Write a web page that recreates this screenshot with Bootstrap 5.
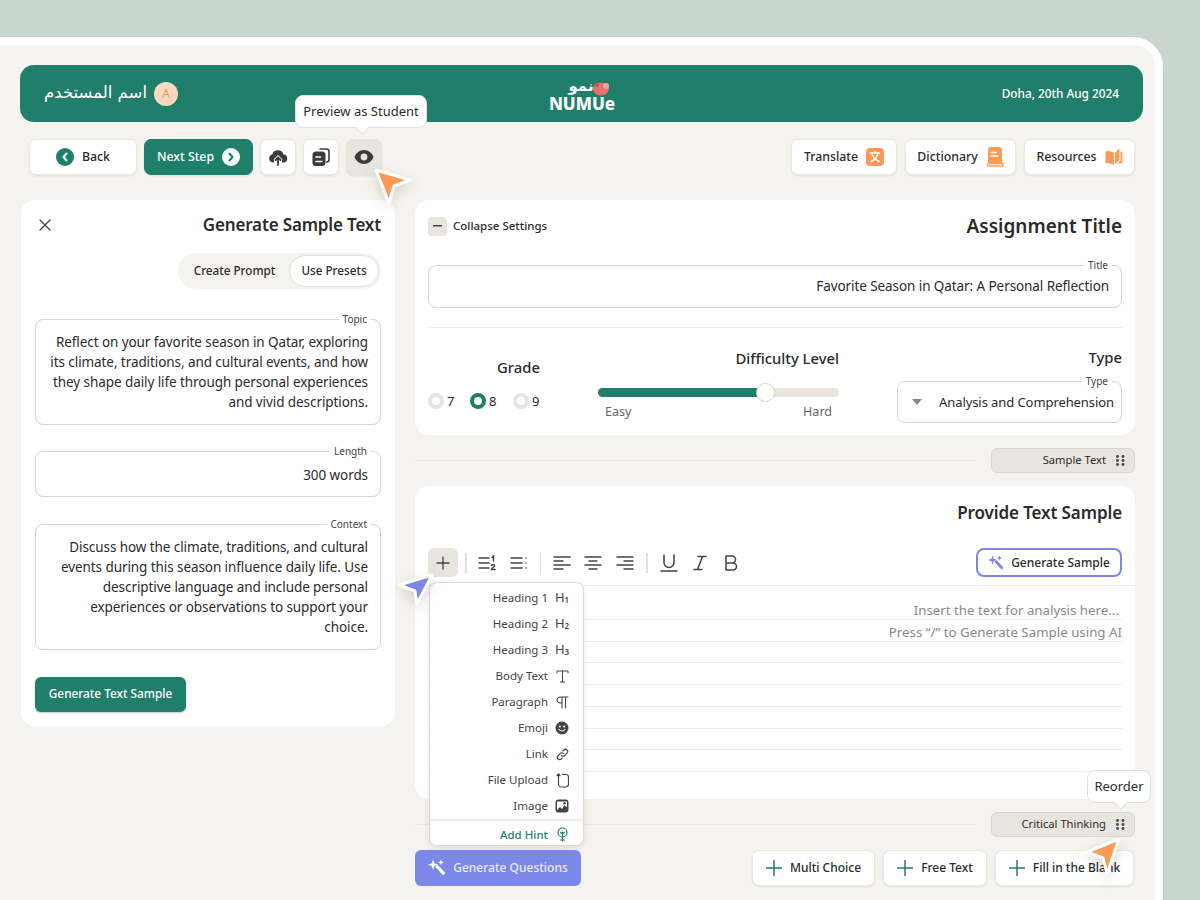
<!DOCTYPE html>
<html lang="en">
<head>
  <meta charset="UTF-8">
  <title>Numue - Assignment</title>
  <link href="https://cdn.jsdelivr.net/npm/bootstrap@5.3.2/dist/css/bootstrap.min.css" rel="stylesheet">
  <style>
    html, body { height: 100%; overflow: hidden; }
    body {
      font-family: "Noto Sans", "DejaVu Sans", sans-serif;
      background-color: #c9d6cf;
      color: #2b2b2b;
      position: relative;
    }
    .frame {
      width: 1203px;
      height: 900px;
      margin: 37px 0 0 -40px;
      padding: 20px 12px 0 52px;
      background: #f5f3ef;
      border: 8px solid #fff;
      border-radius: 30px;
    }
    .top-band {
      height: 57px;
      background: #1f7f6a;
      border-radius: 14px;
      padding: 0 24px;
      color: #fff;
      position: relative;
    }
    .user-name { font-family: "DejaVu Sans", sans-serif; font-size: 16.5px; }
    .avatar {
      width: 24px; height: 24px; border-radius: 50%;
      background: #fbd9c0; color: #f0955a; font-size: 12px; line-height: 24px; text-align: center;
      margin-left: 7px;
    }
    .date-text { font-size: 11.8px; font-weight: 500; }
    .logo-box {
      position: absolute; left: 527px; top: 13px; width: 70px; height: 34px;
      text-align: center; line-height: 1;
    }
    .logo-ar { font-family: "DejaVu Sans", sans-serif; font-size: 15px; font-weight: 700; display: block; height: 17px; line-height: 17px; padding-right: 2px; }
    .logo-en { font-size: 17px; font-weight: 800; display: block; line-height: 17px; }
    .logo-pig { position: absolute; left: 44px; top: 2px; }

    .tool-row { margin-top: 17px; padding: 0 8px 0 9px; height: 36px; }
    .tool-btn {
      height: 36px; padding: 0; background: #fff; color: #2b2b2b; font-size: 12.3px; font-weight: 500;
      border: 1px solid #ebe8e2; border-radius: 7px; box-shadow: 0 1px 2px rgba(90, 80, 60, .12);
      display: inline-flex; align-items: center; justify-content: center; gap: 8px;
    }
    .tool-btn:hover { background: #fff; }
    .left-tools { gap: 7px; }
    .w-back { width: 108px; }
    .w-next { width: 109px; background: #1f7f6a; border-color: #1f7f6a; color: #fff; }
    .w-next:hover { background: #1f7f6a; color: #fff; }
    .w-icon { width: 36px; }
    .w-eye { background: #e8e4de; border-color: #e8e4de; }
    .w-eye:hover { background: #e8e4de; }
    .w-tr { width: 106px; }
    .w-dict { width: 111px; }
    .w-res { width: 111px; }

    .hint-bubble {
      position: absolute; background: #fff; color: #2b2b2b; font-size: 13px; line-height: 1;
      border: 1.5px solid #e5e1da; border-radius: 8px; white-space: nowrap;
      display: flex; align-items: center; justify-content: center;
    }
    .hint-bubble::after {
      content: ""; position: absolute; bottom: -6px; width: 9px; height: 9px; background: #fff;
      border-right: 1.5px solid #e5e1da; border-bottom: 1.5px solid #e5e1da; transform: rotate(45deg);
    }
    .tip-preview { left: -51px; top: -44px; width: 132px; height: 33px; }
    .tip-preview::after { left: 62px; }
    .tip-reorder { right: -17px; top: -43px; width: 64px; height: 33px; }
    .tip-reorder::after { left: 28px; }

    .work-area { margin-top: 25px; padding-left: 1px; gap: 20px; }
    .side-col { width: 374px; flex: none; }
    .main-col { width: 720px; flex: none; }
    .panel { border: 0; border-radius: 14px; background: #fff; }
    .side-panel { height: 526px; padding: 14px; }
    .side-title { font-size: 17px; font-weight: 600; letter-spacing: -.15px; margin: 0; }
    .side-head { padding: 0 0 0 3px; height: 21px; margin-top: 1px; }
    .seg-wrap {
      width: 203px; height: 36px; background: #f5f3ef; border-radius: 18px; padding: 2px;
      margin: 17px 0 0 143px; font-size: 11.7px; font-weight: 500;
    }
    .seg-off { width: 109px; text-align: center; }
    .seg-on { width: 90px; height: 32px; background: #fff; border: 1px solid #e5e1da; border-radius: 16px; }
    .notch-field {
      position: relative; border: 1.5px solid #d9d5ce; border-radius: 8px; background: #fff;
      font-size: 13.5px; letter-spacing: -.08px; line-height: 20px; text-align: right; padding: 12px;
    }
    .notch-label {
      position: absolute; top: -7px; right: 9px; background: #fff; padding: 0 4px;
      font-size: 10px; letter-spacing: 0; line-height: 12px; color: #444;
    }
    .f-topic { height: 106px; margin-top: 30px; }
    .f-length { height: 46px; margin-top: 26px; padding-top: 13px; }
    .f-context { height: 126px; margin-top: 27px; }
    .green-btn {
      width: 151px; height: 36px; background: #1f7f6a; color: #fff; font-size: 11.8px; font-weight: 500;
      border: 0; border-radius: 6px; padding: 0; margin-top: 27px; box-shadow: 0 1px 2px rgba(30, 90, 75, .3);
    }
    .green-btn:hover { background: #1f7f6a; color: #fff; }

    .set-panel { height: 235px; padding: 0 13px; }
    .set-head { height: 52px; }
    .minus-box {
      width: 19px; height: 19px; background: #e8e4de; border-radius: 4px; margin-right: 6px;
      display: inline-flex; align-items: center; justify-content: center;
    }
    .collapse-txt { font-size: 11.5px; font-weight: 500; }
    .big-title { font-size: 19px; font-weight: 600; margin: 0; }
    .f-title { height: 43px; margin-top: 13px; padding: 10px 12px; }
    .soft-rule { border-top: 1.5px solid #efedea; margin: 19px 0 0; opacity: 1; }
    .set-cols { margin-top: 20px; }
    .grade-col { width: 170px; flex: none; }
    .grade-label { font-size: 14.8px; font-weight: 500; text-align: center; padding: 9px 0 0 11px; line-height: 20px; }
    .grade-row { margin-top: 16px; font-size: 13px; padding-left: 0; line-height: 16px; }
    .radio-dot { width: 16px; height: 16px; border-radius: 50%; border: 4px solid #e8e4de; background: #fff; display: inline-block; margin-right: 3px; }
    .radio-dot.picked { border-color: #1f7f6a; }
    .slide-col { width: 241px; flex: none; margin-left: 0; }
    .level-label { font-size: 14.8px; font-weight: 500; text-align: right; line-height: 20px; }
    .slide-track { position: relative; margin-top: 20px; }
    .slide-track .progress { height: 9px; background: #e8e4de; border-radius: 5px; }
    .slide-track .progress-bar { background: #1f7f6a; }
    .slide-thumb {
      position: absolute; left: 158px; top: -5px; width: 19px; height: 19px; border-radius: 50%;
      background: #fff; border: 1.5px solid #d7d3cb;
    }
    .slide-ends { font-size: 12.5px; color: #666; padding: 5px 7px 0; line-height: 20px; }
    .type-col { margin-left: auto; width: 225px; flex: none; }
    .type-label { font-size: 14.8px; font-weight: 500; text-align: right; line-height: 20px; margin-top: -1px; }
    .f-type { height: 42px; margin-top: 14px; padding: 10px 8px 10px 14px; white-space: nowrap; font-size: 13px; letter-spacing: -.08px; }
    .caret-down { width: 0; height: 0; border-left: 5px solid transparent; border-right: 5px solid transparent; border-top: 6px solid #8c8880; margin-right: 17px; }

    .split-row { height: 25px; margin: 13px 0; }
    .split-line { flex: 1; border-top: 1.5px solid #ebe8e3; margin-right: 16px; }
    .tag-pill {
      width: 144px; height: 25px; background: #e8e4de; border: 1px solid #dcd8d1; border-radius: 6px;
      font-size: 11.2px; padding-right: 9px; gap: 10px; position: relative;
    }

    .text-panel { height: 313px; position: relative; overflow: visible; }
    .text-title { font-size: 17px; letter-spacing: -.1px; font-weight: 600; text-align: right; margin: 0; padding: 15px 13px 0 0; line-height: 24px; }
    .edit-bar { height: 29px; margin-top: 23px; padding: 0 13px; }
    .plus-box { width: 30px; height: 29px; background: #e8e4de; border-radius: 6px; display: flex; align-items: center; justify-content: center; }
    .bar-sep { width: 1.5px; height: 20px; background: #e5e1da; }
    .gen-btn {
      margin-left: auto; width: 146px; height: 29px; padding: 0; font-size: 12px; font-weight: 500; color: #2b2b2b;
      background: #fff; border: 2px solid #7b88e8; border-radius: 8px;
      display: inline-flex; align-items: center; justify-content: center; gap: 7px;
    }
    .gen-btn:hover { background: #fff; color: #2b2b2b; }
    .edit-rule { border-top: 1.5px solid #efedea; margin-top: 8px; }
    .rule-stack { padding: 12px 13px 0; }
    .rule-line { height: 21.75px; border-bottom: 1.5px solid #efedea; font-size: 13.3px; color: #8a8a8a; text-align: right; line-height: 24px; padding-right: 3px; }
    .rule-line:nth-child(2) { padding-right: 0; }

    .insert-menu {
      position: absolute; left: 14px; top: 96px; width: 155px; min-width: 0; height: 264px; padding: 2px 0 0; margin: 0;
      background: #fff; border: 1.5px solid #dfdbd4; border-radius: 8px; box-shadow: 0 2px 6px rgba(70, 60, 40, .12);
      font-size: 11.5px; z-index: 5;
    }
    .insert-menu .dropdown-item {
      height: 26px; padding: 0 13px 0 0; color: #444; display: flex; align-items: center; justify-content: flex-end; gap: 6px;
    }
    .insert-menu .dropdown-divider { margin: 0; border-top: 2px solid #efedea; }
    .insert-menu .dropdown-item.hint-item { color: #1f7f6a; font-weight: 500; height: 27px; }
    .m-ico { width: 16px; height: 16px; display: flex; align-items: center; justify-content: center; flex: none; font-size: 13px; color: #444; }
    sub.h-num { font-size: 8px; bottom: 0; top: 2px; font-weight: 600; }

    .add-row { height: 36px; margin-top: 2px; }
    .violet-btn {
      width: 166px; height: 36px; padding: 0; background: #7b88e8; color: #e9ebfb; font-size: 12px; font-weight: 500;
      border: 0; border-radius: 6px; display: inline-flex; align-items: center; justify-content: center; gap: 7px;
    }
    .violet-btn:hover { background: #7b88e8; color: #e9ebfb; }
    .add-group { margin-right: 1px; }
    .add-btn { gap: 8px; font-size: 12px; }
    .w-multi { width: 123px; }
    .w-free { width: 104px; }
    .w-blank { width: 139px; }

    .cursor-mark { position: absolute; z-index: 20; filter: drop-shadow(0 4px 6px rgba(60, 50, 30, .18)); }
    .cur-a { left: 370px; top: 164px; }
    .cur-b { left: 394px; top: 570px; }
    .cur-c { left: 1082px; top: 834px; }
  </style>
</head>

<body>
  <div class="frame">
    <!-- top band -->
    <div class="top-band d-flex align-items-center justify-content-between">
      <div class="d-flex align-items-center">
        <span class="user-name" dir="rtl">اسم المستخدم</span>
        <span class="avatar">A</span>
      </div>
      <div class="logo-box">
        <span class="logo-ar" dir="rtl">نمو</span>
        <span class="logo-en">NUMUe</span>
        <svg class="logo-pig" width="20" height="17" viewBox="0 0 20 17"><ellipse cx="10" cy="9" rx="8" ry="6.5" fill="#e8716d"/><circle cx="15" cy="6" r="3" fill="#f4a39c"/><circle cx="6" cy="5" r="2" fill="#c9524f"/></svg>
      </div>
      <span class="date-text">Doha, 20th Aug 2024</span>
    </div>

    <!-- toolbar -->
    <div class="tool-row d-flex">
      <div class="d-flex left-tools">
        <button class="btn tool-btn w-back">
          <svg width="18" height="18" viewBox="0 0 18 18"><circle cx="9" cy="9" r="9" fill="#1f7f6a"/><path d="M10.5 5.5 7.5 9l3 3.5" fill="none" stroke="#fff" stroke-width="2" stroke-linecap="round" stroke-linejoin="round"/></svg>
          Back
        </button>
        <button class="btn tool-btn w-next">
          Next Step
          <svg width="18" height="18" viewBox="0 0 18 18"><circle cx="9" cy="9" r="9" fill="#fff"/><path d="M7.5 5.5 10.5 9l-3 3.5" fill="none" stroke="#1f7f6a" stroke-width="2" stroke-linecap="round" stroke-linejoin="round"/></svg>
        </button>
        <button class="btn tool-btn w-icon">
          <svg width="20" height="20" viewBox="0 0 20 20"><path d="M6 15.5H5A4 4 0 0 1 4.3 7.6 5.8 5.8 0 0 1 15.5 7.5 4 4 0 0 1 15 15.5h-1V12.5l1 .6-5-5-5 5 1-.6z" fill="#3b3b3b"/><path d="M10 18V11M7.5 13 10 10.5 12.5 13" fill="none" stroke="#3b3b3b" stroke-width="1.8" stroke-linecap="round" stroke-linejoin="round"/></svg>
        </button>
        <button class="btn tool-btn w-icon">
          <svg width="20" height="20" viewBox="0 0 20 20"><path d="M9 2h6.500a2.500 2.500 0 0 1 2.500 2.500v8a2.500 2.500 0 0 1-2.500 2.500" fill="none" stroke="#3b3b3b" stroke-width="1.6" stroke-linecap="round"/><rect x="1.500" y="4.500" width="13" height="14.500" rx="3.500" fill="#3b3b3b"/><path d="M5 10h4.500M5 14.500h6" stroke="#fff" stroke-width="1.600" stroke-linecap="round"/></svg>
        </button>
        <div class="position-relative">
          <button class="btn tool-btn w-icon w-eye">
            <svg width="20" height="14" viewBox="0 0 20 14"><path d="M10 0C5.500 0 2 3 .5 7 2 11 5.500 14 10 14s8-3 9.500-7C18 3 14.500 0 10 0z" fill="#3b3b3b"/><circle cx="10" cy="7" r="3.400" fill="#e8e4de"/></svg>
          </button>
          <div class="hint-bubble tip-preview">Preview as Student</div>
        </div>
      </div>
      <div class="d-flex gap-2 ms-auto">
        <button class="btn tool-btn w-tr">
          Translate
          <svg width="18" height="18" viewBox="0 0 18 18"><rect width="18" height="18" rx="4" fill="#ff9a56"/><path d="M4.500 5h9M9 3.500V5M6 5.500c.8 3.500 3.500 6.500 7 8M12 5.500c-.8 3.500-3.500 6.500-7 8" fill="none" stroke="#fff" stroke-width="1.400" stroke-linecap="round"/></svg>
        </button>
        <button class="btn tool-btn w-dict">
          Dictionary
          <svg width="18" height="20" viewBox="0 0 18 20"><path d="M2 3a3 3 0 0 1 3-3h8a3 3 0 0 1 3 3v13H2z" fill="#ff9a56"/><path d="M5 5.500h5M5 9h7" stroke="#fff" stroke-width="1.500" stroke-linecap="round"/><path d="M1.500 17.500a1 1 0 0 1 1-1H17v2.500H2.500a1 1 0 0 1-1-1z" fill="none" stroke="#ff9a56" stroke-width="1.300"/></svg>
        </button>
        <button class="btn tool-btn w-res">
          Resources
          <svg width="18" height="18" viewBox="0 0 18 18" fill="#ff9a56"><path d="M.5 4.500A1.500 1.500 0 0 1 2 3c2.500 0 5 .6 7 2v12c-2-1.200-4.500-1.700-7-1.700a1.500 1.500 0 0 1-1.500-1.500z"/><path d="M10 5 13.500 1c.4-.4.9-.2.9.3V12L10 16z"/><path d="M15.500 3.500h.5A1.500 1.500 0 0 1 17.500 5v8.800a1.500 1.500 0 0 1-1.500 1.500c-1.800 0-3.300.4-4.800 1.200l4.300-3.800z"/></svg>
        </button>
      </div>
    </div>

    <div class="work-area d-flex align-items-start">
      <!-- left panel -->
      <div class="side-col">
        <div class="card panel side-panel">
          <div class="side-head d-flex align-items-center justify-content-between">
            <svg width="14" height="14" viewBox="0 0 14 14"><path d="M2 2l10 10M12 2 2 12" stroke="#444" stroke-width="1.300" stroke-linecap="round"/></svg>
            <h2 class="side-title">Generate Sample Text</h2>
          </div>
          <div class="seg-wrap d-flex align-items-center">
            <span class="seg-off">Create Prompt</span>
            <span class="seg-on d-flex align-items-center justify-content-center">Use Presets</span>
          </div>
          <div class="notch-field f-topic">
            <span class="notch-label">Topic</span>
            Reflect on your favorite season in Qatar, exploring<br>its climate, traditions, and cultural events, and how<br>they shape daily life through personal experiences<br>and vivid descriptions.
          </div>
          <div class="notch-field f-length">
            <span class="notch-label">Length</span>
            300 words
          </div>
          <div class="notch-field f-context">
            <span class="notch-label">Context</span>
            Discuss how the climate, traditions, and cultural<br>events during this season influence daily life. Use<br>descriptive language and include personal<br>experiences or observations to support your<br>choice.
          </div>
          <button class="btn green-btn">Generate Text Sample</button>
        </div>
      </div>

      <!-- right column -->
      <div class="main-col">
        <div class="card panel set-panel">
          <div class="set-head d-flex align-items-center justify-content-between">
            <div class="d-flex align-items-center">
              <span class="minus-box"><svg width="9" height="2" viewBox="0 0 9 2"><rect width="9" height="1.500" fill="#444"/></svg></span>
              <span class="collapse-txt">Collapse Settings</span>
            </div>
            <h2 class="big-title">Assignment Title</h2>
          </div>
          <div class="notch-field f-title">
            <span class="notch-label">Title</span>
            Favorite Season in Qatar: A Personal Reflection
          </div>
          <hr class="soft-rule">
          <div class="set-cols d-flex">
            <div class="grade-col">
              <div class="grade-label">Grade</div>
              <div class="grade-row d-flex">
                <span class="d-flex align-items-center" style="width:42px"><span class="radio-dot"></span>7</span>
                <span class="d-flex align-items-center" style="width:43px"><span class="radio-dot picked"></span>8</span>
                <span class="d-flex align-items-center"><span class="radio-dot"></span>9</span>
              </div>
            </div>
            <div class="slide-col">
              <div class="level-label">Difficulty Level</div>
              <div class="slide-track">
                <div class="progress"><div class="progress-bar" style="width: 69%"></div></div>
                <span class="slide-thumb"></span>
              </div>
              <div class="slide-ends d-flex justify-content-between"><span>Easy</span><span>Hard</span></div>
            </div>
            <div class="type-col">
              <div class="type-label">Type</div>
              <div class="notch-field f-type d-flex align-items-center">
                <span class="notch-label">Type</span>
                <span class="caret-down"></span>
                <span>Analysis and Comprehension</span>
              </div>
            </div>
          </div>
        </div>

        <div class="split-row d-flex align-items-center">
          <div class="split-line"></div>
          <div class="tag-pill d-flex align-items-center justify-content-end">
            Sample Text
            <svg width="9" height="11" viewBox="0 0 9 11" fill="#444"><circle cx="1.500" cy="1.500" r="1.400"/><circle cx="7" cy="1.500" r="1.400"/><circle cx="1.500" cy="5.500" r="1.400"/><circle cx="7" cy="5.500" r="1.400"/><circle cx="1.500" cy="9.500" r="1.400"/><circle cx="7" cy="9.500" r="1.400"/></svg>
          </div>
        </div>

        <div class="card panel text-panel">
          <h2 class="text-title">Provide Text Sample</h2>
          <div class="edit-bar d-flex align-items-center">
            <span class="plus-box"><svg width="14" height="14" viewBox="0 0 14 14"><path d="M7 1v12M1 7h12" stroke="#444" stroke-width="1.300" stroke-linecap="round"/></svg></span>
            <span class="bar-sep" style="margin:0 11px 0 7px"></span>
            <svg class="me-2" width="20" height="16" viewBox="0 0 20 16" fill="none" stroke="#444" stroke-width="1.500" stroke-linecap="round"><path d="M1 3h10M1 8h10M1 13h10M14 2.500 15.500 1v5M13.500 10.500c1-1.500 3.500-1 3 .5-.3 1-2.500 2-3 3.500h3.500"/></svg>
            <svg width="18" height="16" viewBox="0 0 18 16" class="ms-1" fill="none" stroke="#444" stroke-width="1.500" stroke-linecap="round"><path d="M1 3h11M1 8h11M1 13h11M16 3h.1M16 8h.1M16 13h.1"/></svg>
            <span class="bar-sep" style="margin:0 12px 0 12px"></span>
            <svg width="18" height="16" viewBox="0 0 18 16" fill="none" stroke="#444" stroke-width="1.500" stroke-linecap="round"><path d="M1 2h16M1 6h9M1 10h16M1 14h9"/></svg>
            <svg style="margin-left:13px" width="18" height="16" viewBox="0 0 18 16" fill="none" stroke="#444" stroke-width="1.500" stroke-linecap="round"><path d="M1 2h16M5 6h8M1 10h16M5 14h8"/></svg>
            <svg style="margin-left:14px" width="18" height="16" viewBox="0 0 18 16" fill="none" stroke="#444" stroke-width="1.500" stroke-linecap="round"><path d="M1 2h16M8 6h9M1 10h16M8 14h9"/></svg>
            <span class="bar-sep" style="margin:0 12px 0 12px"></span>
            <svg width="18" height="18" viewBox="0 0 18 18" fill="none" stroke="#444" stroke-width="1.500" stroke-linecap="round"><path d="M4 1v7.500a5 5 0 0 0 10 0V1M1 17h16"/></svg>
            <svg style="margin-left:15px" width="14" height="16" viewBox="0 0 14 16" fill="none" stroke="#444" stroke-width="1.500" stroke-linecap="round"><path d="M5 1.500h8M1 14.500h8M9.500 1.500l-5 13"/></svg>
            <svg style="margin-left:17px" width="14" height="16" viewBox="0 0 14 16" fill="none" stroke="#444" stroke-width="1.500" stroke-linejoin="round"><path d="M2 1h6a3.500 3.500 0 0 1 0 7H2zM2 8h7a3.500 3.500 0 0 1 0 7H2z"/></svg>
            <button class="btn gen-btn">
              <svg width="16" height="16" viewBox="0 0 16 16" fill="#7b88e8"><path d="M6.500 7 8.500 5l7 7.500-2 2z"/><path d="M4.500 .5 5.700 3.800 9 5 5.700 6.200 4.500 9.500 3.300 6.200 0 5 3.300 3.800zM11.500 .5l.8 1.700 1.700.8-1.700.8-.8 1.700-.8-1.700-1.700-.8 1.700-.8z"/></svg>
              Generate Sample
            </button>
          </div>
          <div class="edit-rule"></div>
          <div class="rule-stack">
            <div class="rule-line">Insert the text for analysis here...</div>
            <div class="rule-line">Press “/” to Generate Sample using AI</div>
            <div class="rule-line"></div>
            <div class="rule-line"></div>
            <div class="rule-line"></div>
            <div class="rule-line"></div>
            <div class="rule-line"></div>
            <div class="rule-line"></div>
          </div>

          <ul class="dropdown-menu show insert-menu list-unstyled">
            <li><a class="dropdown-item" href="#">Heading 1 <span class="m-ico">H<sub class="h-num">1</sub></span></a></li>
            <li><a class="dropdown-item" href="#">Heading 2 <span class="m-ico">H<sub class="h-num">2</sub></span></a></li>
            <li><a class="dropdown-item" href="#">Heading 3 <span class="m-ico">H<sub class="h-num">3</sub></span></a></li>
            <li><a class="dropdown-item" href="#">Body Text <span class="m-ico"><svg width="13" height="13" viewBox="0 0 13 13" fill="none" stroke="#444" stroke-width="1" stroke-linecap="round"><path d="M1 3V1h11v2M6.500 1v11M4.500 12h4"/></svg></span></a></li>
            <li><a class="dropdown-item" href="#">Paragraph <span class="m-ico"><svg width="13" height="13" viewBox="0 0 13 13" fill="none" stroke="#444" stroke-width="1.100" stroke-linecap="round"><path d="M5.500 7C2 7 1 5.500 1 4s1.500-3 4-3h7M6 1v11M9.500 1v11"/></svg></span></a></li>
            <li><a class="dropdown-item" href="#">Emoji <span class="m-ico"><svg width="14" height="14" viewBox="0 0 14 14"><circle cx="7" cy="7" r="6.500" fill="#444"/><circle cx="4.800" cy="5.500" r="1" fill="#fff"/><circle cx="9.200" cy="5.500" r="1" fill="#fff"/><path d="M4 8.500c1.500 2 4.500 2 6 0" fill="none" stroke="#fff" stroke-width="1.100" stroke-linecap="round"/></svg></span></a></li>
            <li><a class="dropdown-item" href="#">Link <span class="m-ico"><svg width="13" height="13" viewBox="0 0 13 13" fill="none" stroke="#444" stroke-width="1.100" stroke-linecap="round"><path d="M5.500 7.500a2.200 2.200 0 0 0 3.200 0l2.300-2.300a2.200 2.200 0 0 0-3.200-3.200l-1 1"/><path d="M7.500 5.500a2.200 2.200 0 0 0-3.200 0L2 7.800a2.200 2.200 0 0 0 3.200 3.200l1-1"/></svg></span></a></li>
            <li><a class="dropdown-item" href="#">File Upload <span class="m-ico"><svg width="13" height="15" viewBox="0 0 13 15" fill="none" stroke="#444" stroke-width="1.200" stroke-linecap="round" stroke-linejoin="round"><path d="M2.500 5v7a2.500 2.500 0 0 0 2.500 2h4.500a3 3 0 0 0 3-3V4a2.500 2.500 0 0 0-2.500-2.500H6.500"/><path d="M2.500 5V1M1 2.500 2.500 1 4 2.500"/></svg></span></a></li>
            <li><a class="dropdown-item" href="#">Image <span class="m-ico"><svg width="14" height="14" viewBox="0 0 14 14"><rect x=".5" y=".5" width="13" height="13" rx="3" fill="#444"/><path d="M2 2.500h10v6L9.500 6 7 10 5 8 2 11z" fill="#fff"/><circle cx="9.500" cy="4.300" r="1.200" fill="#444"/></svg></span></a></li>
            <li><hr class="dropdown-divider"></li>
            <li><a class="dropdown-item hint-item" href="#">Add Hint <span class="m-ico"><svg width="13" height="15" viewBox="0 0 13 15" fill="none" stroke="#1f7f6a" stroke-width="1.200" stroke-linecap="round"><circle cx="6.500" cy="5.500" r="4.500"/><path d="M6.500 5v9M4.500 5.500l2 1.500 2-1.500M4.500 13h4"/></svg></span></a></li>
          </ul>
        </div>

        <div class="split-row d-flex align-items-center">
          <div class="split-line"></div>
          <div class="tag-pill d-flex align-items-center justify-content-end">
            Critical Thinking
            <svg width="9" height="11" viewBox="0 0 9 11" fill="#444"><circle cx="1.500" cy="1.500" r="1.400"/><circle cx="7" cy="1.500" r="1.400"/><circle cx="1.500" cy="5.500" r="1.400"/><circle cx="7" cy="5.500" r="1.400"/><circle cx="1.500" cy="9.500" r="1.400"/><circle cx="7" cy="9.500" r="1.400"/></svg>
            <div class="hint-bubble tip-reorder">Reorder</div>
          </div>
        </div>

        <div class="add-row d-flex align-items-center">
          <button class="btn violet-btn">
            <svg width="18" height="18" viewBox="0 0 16 16" fill="#fff"><path d="M6.500 7 8.500 5l7 7.500-2 2z"/><path d="M4.500 .5 5.700 3.800 9 5 5.700 6.200 4.500 9.500 3.300 6.200 0 5 3.300 3.800zM11.500 .5l.8 1.700 1.700.8-1.700.8-.8 1.700-.8-1.700-1.700-.8 1.700-.8z"/></svg>
            Generate Questions
          </button>
          <div class="d-flex gap-2 ms-auto add-group">
            <button class="btn tool-btn add-btn w-multi"><svg width="16" height="16" viewBox="0 0 16 16"><path d="M8 0v16M0 8h16" stroke="#1f7f6a" stroke-width="1.500"/></svg>Multi Choice</button>
            <button class="btn tool-btn add-btn w-free"><svg width="16" height="16" viewBox="0 0 16 16"><path d="M8 0v16M0 8h16" stroke="#1f7f6a" stroke-width="1.500"/></svg>Free Text</button>
            <button class="btn tool-btn add-btn w-blank"><svg width="16" height="16" viewBox="0 0 16 16"><path d="M8 0v16M0 8h16" stroke="#1f7f6a" stroke-width="1.500"/></svg>Fill in the Blank</button>
          </div>
        </div>
      </div>
    </div>
  </div>

  <!-- presence cursors -->
  <svg class="cursor-mark cur-a" width="46" height="44" viewBox="0 0 46 44"><path d="M6 6 40 16 24 22 19 39z" fill="#ff9a56" stroke="#fff" stroke-width="3" stroke-linejoin="round"/></svg>
  <svg class="cursor-mark cur-b" width="44" height="38" viewBox="0 0 44 38"><path d="M38 5 5 15 21 21 23 34z" fill="#7b88e8" stroke="#fff" stroke-width="3" stroke-linejoin="round"/></svg>
  <svg class="cursor-mark cur-c" width="44" height="44" viewBox="0 0 44 44"><path d="M37 5 5 18 21 24 25 40z" fill="#ff9a56" stroke="#fff" stroke-width="3" stroke-linejoin="round"/></svg>

  <script src="https://cdn.jsdelivr.net/npm/bootstrap@5.3.2/dist/js/bootstrap.bundle.min.js"></script>
</body>
</html>
